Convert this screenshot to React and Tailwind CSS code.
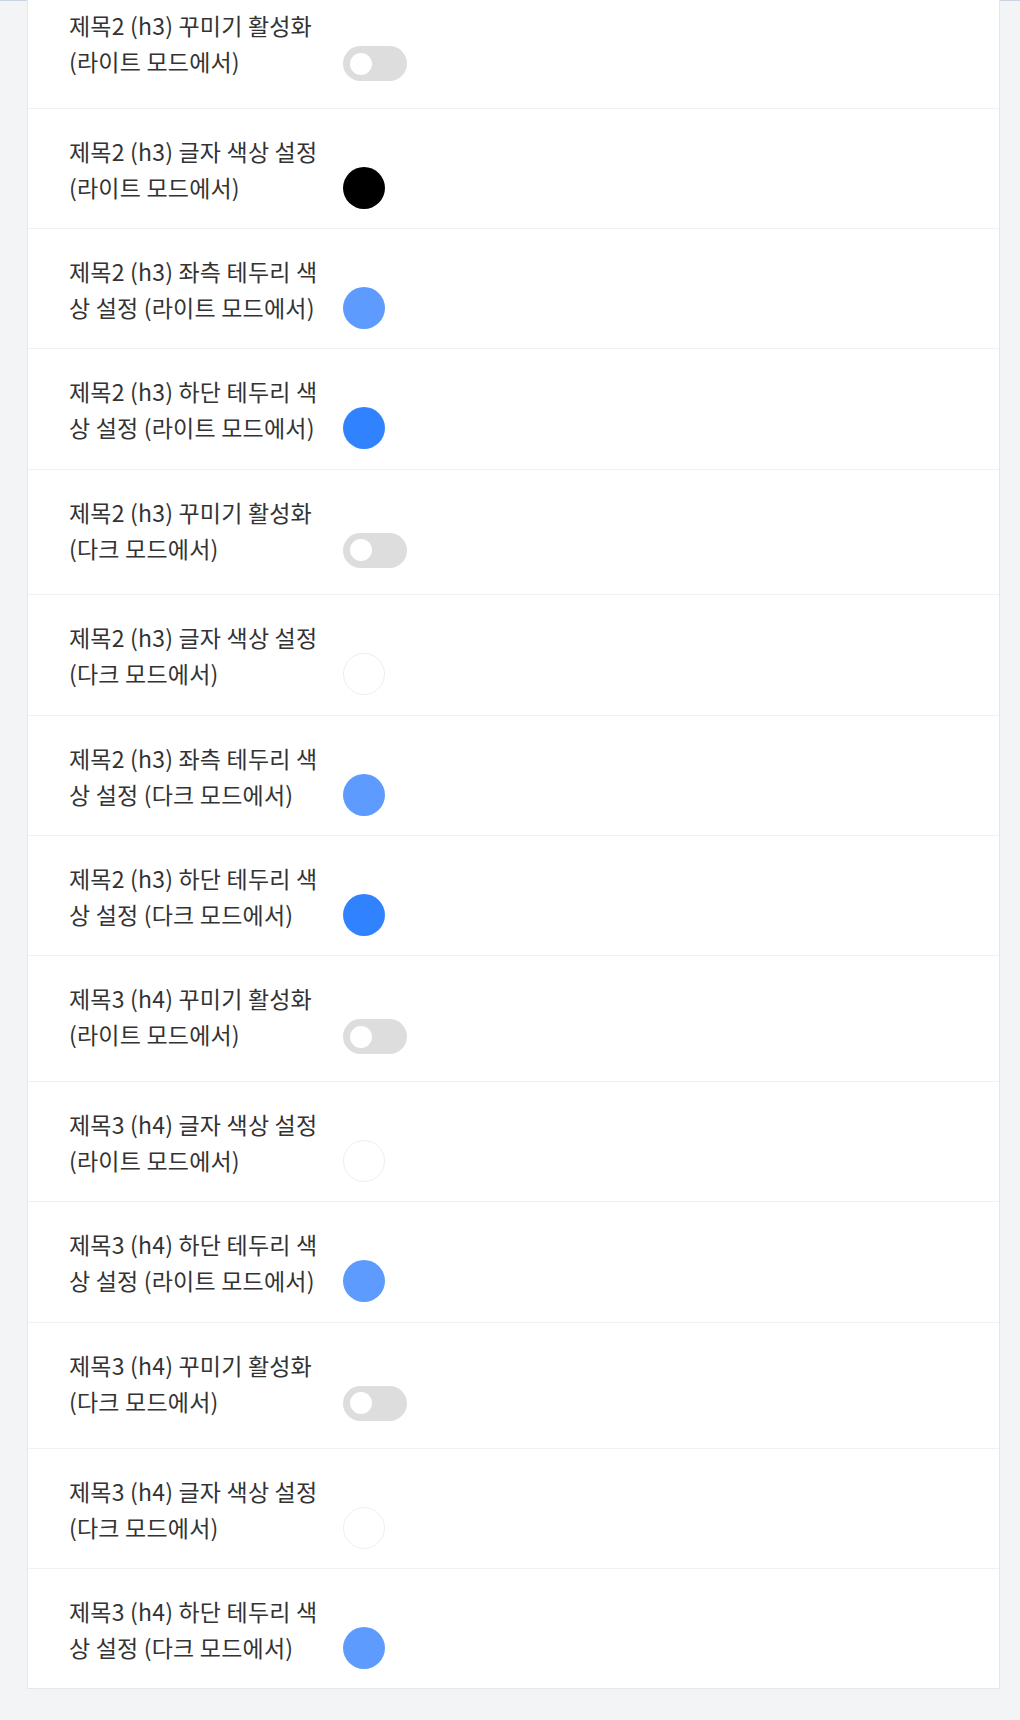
import React from "react";

const rows = [
  { label: "제목2 (h3) 꾸미기 활성화 (라이트 모드에서)", type: "toggle" },
  { label: "제목2 (h3) 글자 색상 설정 (라이트 모드에서)", type: "color", color: "black" },
  { label: "제목2 (h3) 좌측 테두리 색상 설정 (라이트 모드에서)", type: "color", color: "light" },
  { label: "제목2 (h3) 하단 테두리 색상 설정 (라이트 모드에서)", type: "color", color: "blue" },
  { label: "제목2 (h3) 꾸미기 활성화 (다크 모드에서)", type: "toggle" },
  { label: "제목2 (h3) 글자 색상 설정 (다크 모드에서)", type: "color", color: "white" },
  { label: "제목2 (h3) 좌측 테두리 색상 설정 (다크 모드에서)", type: "color", color: "light" },
  { label: "제목2 (h3) 하단 테두리 색상 설정 (다크 모드에서)", type: "color", color: "blue" },
  { label: "제목3 (h4) 꾸미기 활성화 (라이트 모드에서)", type: "toggle" },
  { label: "제목3 (h4) 글자 색상 설정 (라이트 모드에서)", type: "color", color: "white" },
  { label: "제목3 (h4) 하단 테두리 색상 설정 (라이트 모드에서)", type: "color", color: "light" },
  { label: "제목3 (h4) 꾸미기 활성화 (다크 모드에서)", type: "toggle" },
  { label: "제목3 (h4) 글자 색상 설정 (다크 모드에서)", type: "color", color: "white" },
  { label: "제목3 (h4) 하단 테두리 색상 설정 (다크 모드에서)", type: "color", color: "light" },
];

function Swatch({ color }) {
  if (color === "black") return <div className="mt-[34px] h-[42px] w-[42px] rounded-full bg-black" />;
  if (color === "light") return <div className="mt-[34px] h-[42px] w-[42px] rounded-full bg-[#5d9bff]" />;
  if (color === "blue") return <div className="mt-[34px] h-[42px] w-[42px] rounded-full bg-[#3182ff]" />;
  return <div className="mt-[34px] h-[42px] w-[42px] rounded-full border border-[#eeeeee] bg-white" />;
}

function Toggle() {
  return (
    <div className="mt-[39px] mb-[7.35px] flex h-[35px] w-[64px] items-center rounded-full bg-[#dddddd] px-[7px]">
      <div className="h-[22px] w-[22px] rounded-full bg-white" />
    </div>
  );
}

export default function App() {
  return (
    <div className="min-h-[1720px] border-t border-[#cbd5e1] bg-[#f3f4f6] pl-[27px] pr-[20px] [font-family:'Noto_Sans_CJK_KR','Noto_Sans',sans-serif]">
      <div className="-mt-[19px] border border-[#e5e7eb] bg-white">
        {rows.map((r, i) => (
          <div
            key={i}
            className={`flex items-start px-[41px] pt-6 pb-[19.35px] ${i < rows.length - 1 ? "border-b border-[#f0f1f3]" : ""}`}
          >
            <div className="mr-[16px] w-[258px] text-[23px] leading-[36px] tracking-[0.2px] text-[#333333]">
              {r.label}
            </div>
            {r.type === "toggle" ? <Toggle /> : <Swatch color={r.color} />}
          </div>
        ))}
      </div>
    </div>
  );
}
